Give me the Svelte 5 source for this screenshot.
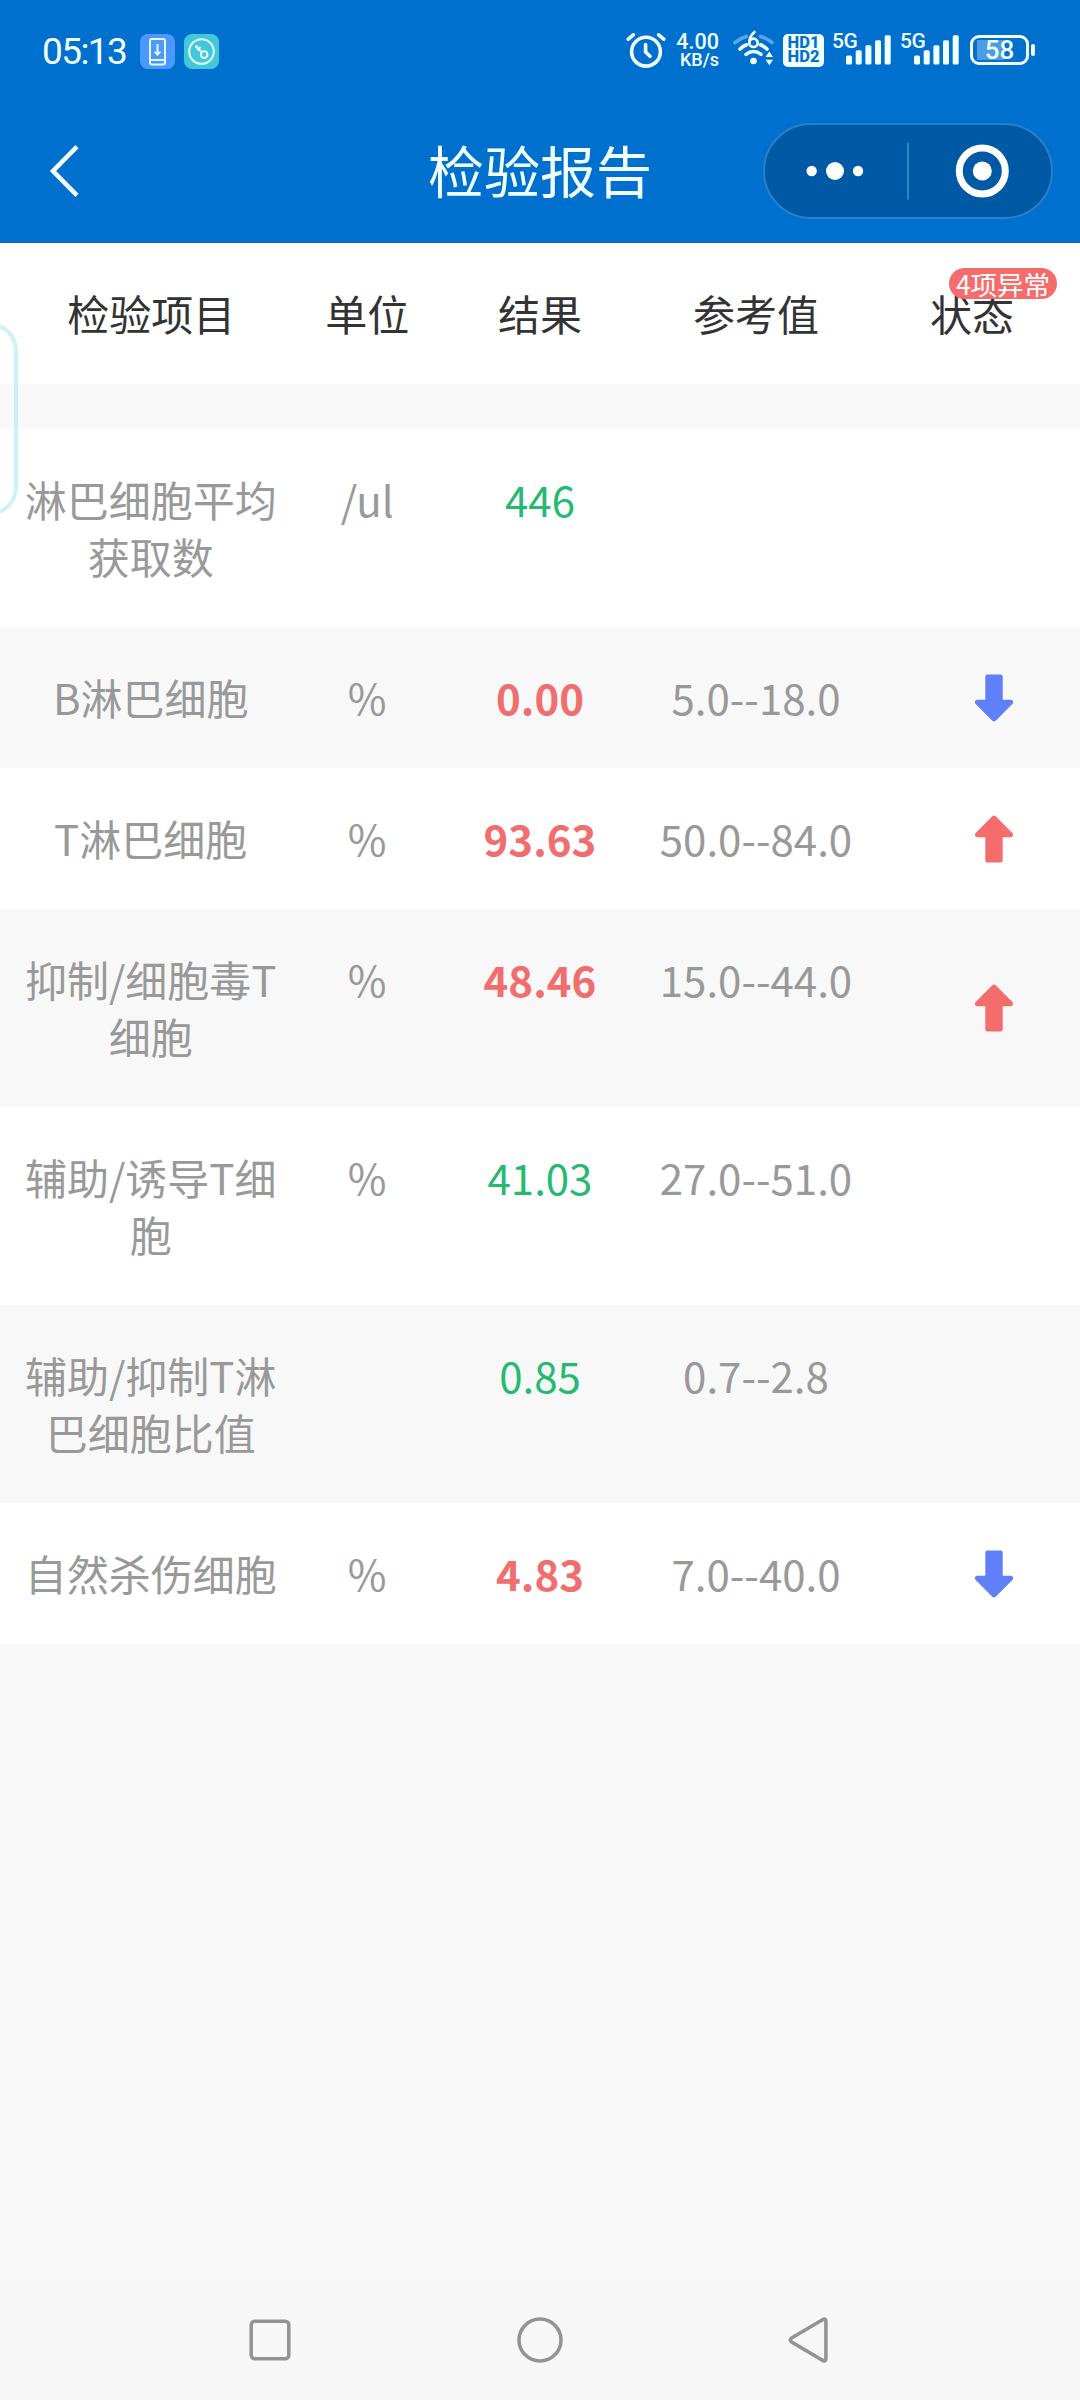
<script lang="ts">
  type Row = { name: string; unit: string; value: string; range: string; flag: '' | 'up' | 'down' };

  const columns = ['检验项目', '单位', '结果', '参考值', '状态'];

  const rows: Row[] = [
    { name: '淋巴细胞平均获取数', unit: '/ul', value: '446', range: '', flag: '' },
    { name: 'B淋巴细胞', unit: '%', value: '0.00', range: '5.0--18.0', flag: 'down' },
    { name: 'T淋巴细胞', unit: '%', value: '93.63', range: '50.0--84.0', flag: 'up' },
    { name: '抑制/细胞毒T细胞', unit: '%', value: '48.46', range: '15.0--44.0', flag: 'up' },
    { name: '辅助/诱导T细胞', unit: '%', value: '41.03', range: '27.0--51.0', flag: '' },
    { name: '辅助/抑制T淋巴细胞比值', unit: '', value: '0.85', range: '0.7--2.8', flag: '' },
    { name: '自然杀伤细胞', unit: '%', value: '4.83', range: '7.0--40.0', flag: 'down' }
  ];

  const abnormal = rows.filter((r) => r.flag !== '').length;
</script>

{#snippet signal()}
  <div class="signal">
    <span class="gen">5G</span>
    <svg width="46" height="30" viewBox="0 0 46 30" fill="#f2ffff">
      <rect x="0" y="20.5" width="6" height="9" rx="1.5" />
      <rect x="9.7" y="15.3" width="6" height="14.2" rx="1.5" />
      <rect x="19.4" y="10.2" width="6" height="19.3" rx="1.5" />
      <rect x="29" y="5.2" width="6" height="24.3" rx="1.5" />
      <rect x="38.7" y="0.2" width="6" height="29.3" rx="1.5" />
    </svg>
  </div>
{/snippet}

<div class="screen">
  <header>
    <div class="status">
      <span class="clock">05:13</span>
      <svg class="app-icon" width="35" height="35" viewBox="0 0 35 35" fill="none" stroke="#e6f7ff" stroke-width="2">
        <rect width="35" height="35" rx="8" fill="#4b99ff" stroke="none" />
        <rect x="10" y="5" width="15" height="25.5" rx="2" />
        <path d="M10 26h15" />
        <path d="M17.5 10v9" />
        <path d="M14.2 18.2h6.6l-3.3 3.4z" fill="#e6f7ff" stroke-width="1" />
      </svg>
      <svg class="app-icon" width="35" height="35" viewBox="0 0 35 35" fill="none" stroke="#e2fcff" stroke-width="2">
        <rect width="35" height="35" rx="8" fill="#43c8d9" stroke="none" />
        <circle cx="17.5" cy="17.5" r="12.3" />
        <circle cx="20.2" cy="20.6" r="3.3" />
        <path d="M17.8 18.2L11.5 12M13.5 16.2l3-3.2M11.5 13.8l2-2" />
      </svg>

      <div class="indicators">
        <svg class="alarm" width="40" height="38" viewBox="0 0 40 38" fill="none" stroke="#f2ffff" stroke-width="3.6" stroke-linecap="round">
          <circle cx="20" cy="20.7" r="14.4" />
          <path d="M19.6 13.5v7.6l4.4 4.2M2.3 8.2l5-4.4M37.7 8.2l-5-4.4" />
        </svg>
        <div class="speed"><span>4.00</span><span class="kb">KB/s</span></div>
        <svg class="wifi" width="44" height="36" viewBox="0 0 44 36" fill="none" stroke="#f2ffff" stroke-width="3.6" stroke-linecap="round">
          <path d="M3 12.5q5.500-4.600 11.500-6.100M28.500 6.400q6 1.500 11.500 6.100" stroke="#5ba5e8" />
          <path d="M8 19q3.200-3 6.600-4.200M28.500 14.800q3.400 1.200 6.500 4.200" />
          <path d="M14 24.400q7.600-5.800 15 0" />
          <circle cx="21.500" cy="31" r="3.300" fill="#f2ffff" stroke="none" />
          <circle cx="21.500" cy="12.800" r="4.200" stroke-width="2.600" />
          <path d="M17.300 12q.3-6 5.200-10" stroke-width="2.600" />
          <path d="M33.500 27l3.800-5.500 3.800 5.500zM33.500 29.800l3.800 5.500 3.800-5.500z" fill="#f2ffff" stroke="none" />
        </svg>
        <div class="hd"><span>HD1</span><span>HD2</span></div>
        {@render signal()}
        {@render signal()}
        <div class="battery"><span>58</span></div>
      </div>
    </div>

    <div class="navbar">
      <svg class="back" width="32" height="56" viewBox="0 0 32 56" fill="none" stroke="#f8ffff" stroke-width="4.500">
        <path d="M28 3.600L4 28l24 24.400" />
      </svg>
      <h1>检验报告</h1>
      <div class="capsule">
        <svg width="286" height="92" viewBox="0 0 286 92" fill="#fff">
          <circle cx="46.700" cy="46" r="5.200" />
          <circle cx="70" cy="46" r="9" />
          <circle cx="93" cy="46" r="5.200" />
          <rect x="142" y="17.500" width="2" height="57" fill="#3583c5" />
          <circle cx="217.300" cy="46" r="23" fill="none" stroke="#fff" stroke-width="7" />
          <circle cx="217.300" cy="46" r="9.500" />
        </svg>
      </div>
    </div>
  </header>

  <main>
    <div class="row head">
      {#each columns as title, i}
        <div class="cell">
          {title}
          {#if i === 4}<span class="badge">{abnormal}项异常</span>{/if}
        </div>
      {/each}
    </div>

    <div class="list">
      {#each rows as row}
        <div class="row">
          <div class="cell name">{row.name}</div>
          <div class="cell">{row.unit}</div>
          <div class="cell value" class:bad={row.flag !== ''}>{row.value}</div>
          <div class="cell">{row.range}</div>
          <div class="cell state">
            {#if row.flag}
              <svg class={row.flag} width="40" height="48" viewBox="0 0 40 48">
                <path d="M18.300 1.200q1.700-1.500 3.400 0L38.600 18.300q1.600 3.100-1.600 3.900H28.700V45.500q0 2-2 2H13.300q-2 0-2-2V22.200H3q-3.200-.8-1.600-3.900z" />
              </svg>
            {/if}
          </div>
        </div>
      {/each}
    </div>
    <div class="side-handle"></div>
  </main>

  <footer>
    <svg width="50" height="50" viewBox="0 0 50 50"><rect x="6.200" y="6.200" width="37.600" height="37.600" rx="3.500" /></svg>
    <svg width="50" height="50" viewBox="0 0 50 50"><circle cx="25" cy="25" r="21" /></svg>
    <svg width="50" height="50" viewBox="0 0 50 50"><path d="M38.400 4.200L6.200 23.300q-2 1.700 0 3.400L38.400 45.800q2.500.8 2.500-2V6.200q0-2.800-2.500-2z" /></svg>
  </footer>
</div>

<style>
  :global(body) {
    margin: 0;
    background: #f8f8f8;
  }

  .screen {
    display: flex;
    flex-direction: column;
    width: 1080px;
    height: 2400px;
    overflow: hidden;
    background: #f8f8f8;
    font-family: 'Noto Sans CJK SC', sans-serif;
    font-size: 42px;
    line-height: 57px;
    color: #999;
  }

  header {
    height: 243px;
    background: #0070cf;
    color: #f2ffff;
  }

  .status {
    display: flex;
    align-items: center;
    height: 103px;
    box-sizing: border-box;
    padding: 0 51px 0 42px;
    font-family: Roboto, sans-serif;
  }

  .clock {
    width: 98px;
    font-size: 37px;
    letter-spacing: -1.600px;
    line-height: 44px;
    white-space: nowrap;
  }

  .app-icon {
    margin-right: 9px;
  }

  .indicators {
    display: flex;
    align-items: center;
    height: 40px;
    margin-left: auto;
  }

  .alarm {
    margin: -3px 12px 0 0;
  }

  .speed {
    display: flex;
    flex-direction: column;
    align-items: flex-end;
    width: 42px;
    font-size: 21.500px;
    font-weight: 500;
    line-height: 18px;
    margin: -2px 13px 0 -1px;
  }

  .kb {
    font-size: 18px;
  }

  .wifi {
    margin: -7px 7px 0 0;
  }

  .hd {
    display: flex;
    flex-direction: column;
    align-items: center;
    justify-content: center;
    width: 41px;
    height: 33px;
    margin: -3px 9px 0 0;
    border-radius: 5px;
    background: #f2ffff;
    color: #0070cf;
    font-size: 16.500px;
    font-weight: 800;
    line-height: 14.500px;
  }

  .signal {
    position: relative;
    display: flex;
    justify-content: flex-end;
    width: 59px;
    height: 34px;
    margin-right: 9px;
    box-sizing: border-box;
  }

  .gen {
    position: absolute;
    left: -1px;
    top: -6px;
    font-size: 21px;
    font-weight: 500;
    line-height: 24px;
    letter-spacing: -0.5px;
  }

  .battery {
    position: relative;
    display: flex;
    align-items: center;
    justify-content: center;
    width: 59px;
    height: 30px;
    box-sizing: border-box;
    margin-top: -4px;
    margin-left: 1px;
    border: 3px solid #f2ffff;
    border-radius: 9px;
    background: linear-gradient(#4d9ce2, #4d9ce2) 4px 2px / 27px 20px no-repeat;
    font-size: 26px;
    font-weight: 500;
    line-height: 24px;
  }

  .battery span {
    padding-top: 1px;
  }

  .battery::after {
    content: '';
    position: absolute;
    right: -9px;
    top: 6px;
    width: 4px;
    height: 12px;
    border-radius: 2px;
    background: #f2ffff;
  }

  .navbar {
    display: grid;
    grid-template-columns: 1fr auto 1fr;
    align-items: center;
    height: 136px;
    padding: 0 27px 0 49px;
  }

  h1 {
    margin: 0;
    font-size: 56px;
    font-weight: 400;
    line-height: 80px;
    transform: translate(-11px, -2px);
  }

  .capsule {
    display: flex;
    justify-self: end;
    border: 2px solid #2a7fc8;
    border-radius: 48px;
    background: #0059a5;
  }

  main {
    position: relative;
    flex: 1;
  }

  .row {
    display: grid;
    grid-template-columns: 28% 12% 20% 20% 20%;
    padding: 41px 0 43px;
    background: #fff;
    text-align: center;
  }

  .row.head {
    color: #333;
  }

  .cell {
    position: relative;
  }

  .name {
    padding: 0 21.500px 0 20.500px;
    word-break: break-all;
  }

  .list {
    margin-top: 45px;
  }

  .list .row:nth-child(even) {
    background: #f8f8f8;
  }

  .value {
    color: #25ba6f;
  }

  .value.bad {
    color: #f06e6e;
    font-weight: 700;
  }

  .state {
    display: flex;
    align-items: center;
    justify-content: center;
    padding: 2px 0 0 45px;
  }

  .up {
    fill: #f56c6c;
  }

  .down {
    fill: #5f80f8;
    transform: rotate(180deg);
  }

  .badge {
    position: absolute;
    top: -16px;
    left: 85px;
    width: 108px;
    height: 31px;
    border-radius: 16px;
    background: #f56c6c;
    color: #fff;
    font-size: 26.500px;
    line-height: 31px;
    white-space: nowrap;
  }

  .side-handle {
    position: absolute;
    left: -40px;
    top: 79px;
    width: 58px;
    height: 194px;
    box-sizing: border-box;
    border: 4px solid rgba(160, 232, 236, 0.5);
    border-radius: 30px;
  }

  footer {
    display: flex;
    justify-content: space-between;
    align-items: center;
    height: 120px;
    padding: 0 245px;
    background: #f7f7f7;
  }

  footer svg {
    fill: none;
    stroke: #939393;
    stroke-width: 3.500;
  }
</style>
